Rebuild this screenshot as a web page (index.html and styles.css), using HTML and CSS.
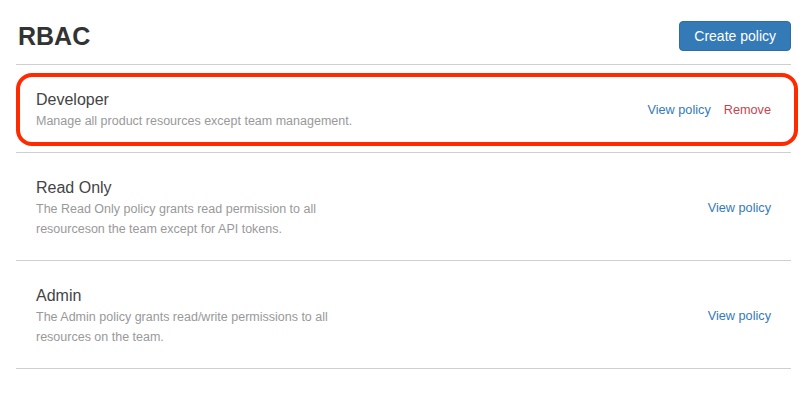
FILE: index.html
```html
<!DOCTYPE html>
<html>
<head>
<meta charset="utf-8">
<link rel="stylesheet" href="styles.css">
</head>
<body>
<div class="page">
  <header class="header">
    <h1 class="title">RBAC</h1>
    <button class="btn-primary">Create policy</button>
  </header>
  <ul class="policies">
    <li class="policy highlighted">
      <div class="info">
        <div class="name">Developer</div>
        <div class="desc">Manage all product resources except team management.</div>
      </div>
      <div class="actions">
        <a class="link">View policy</a>
        <a class="link danger">Remove</a>
      </div>
      <div class="highlight"></div>
    </li>
    <li class="policy">
      <div class="info">
        <div class="name">Read Only</div>
        <div class="desc">The Read Only policy grants read permission to all resourceson the team except for API tokens.</div>
      </div>
      <div class="actions">
        <a class="link">View policy</a>
      </div>
    </li>
    <li class="policy">
      <div class="info">
        <div class="name">Admin</div>
        <div class="desc">The Admin policy grants read/write permissions to all resources on the team.</div>
      </div>
      <div class="actions">
        <a class="link">View policy</a>
      </div>
    </li>
  </ul>
</div>
</body>
</html>
```
FILE: styles.css
```css
* { box-sizing: border-box; }
html, body {
  margin: 0;
  padding: 0;
  background: #fff;
  font-family: "Liberation Sans", Arial, Helvetica, sans-serif;
  color: #333;
}
.page {
  margin: 0 18px 0 16px;
}
.header {
  display: flex;
  justify-content: space-between;
  align-items: center;
  padding-top: 21px;
  padding-bottom: 13px;
  border-bottom: 1px solid #cdcfd2;
}
.title {
  margin: 0;
  font-size: 25px;
  font-weight: bold;
  color: #333;
  line-height: 30px;
  padding-left: 2px;
}
.btn-primary {
  font-family: inherit;
  font-size: 14px;
  line-height: 20px;
  padding: 4px 14px;
  color: #fff;
  background: #337ab7;
  border: 1px solid #2e6da4;
  border-radius: 4px;
  cursor: pointer;
}
.policies {
  list-style: none;
  margin: 0;
  padding: 0;
}
.policy {
  position: relative;
  display: flex;
  justify-content: space-between;
  align-items: center;
  padding: 24px 20px 21px 20px;
  border-bottom: 1px solid #cdcfd2;
}
.name {
  font-size: 16px;
  line-height: 22px;
  color: #444;
}
.desc {
  font-size: 12.5px;
  line-height: 20px;
  color: #999;
  max-width: 345px;
}
.actions {
  display: flex;
  gap: 13px;
  font-size: 12.7px;
}
.link {
  color: #337ab7;
  text-decoration: none;
  cursor: pointer;
}
.link.danger {
  color: #c7444f;
}
.highlight {
  position: absolute;
  left: 0;
  right: -7px;
  top: 8px;
  height: 73px;
  border: 4px solid #ff2a00;
  border-radius: 16px;
  pointer-events: none;
}
```
